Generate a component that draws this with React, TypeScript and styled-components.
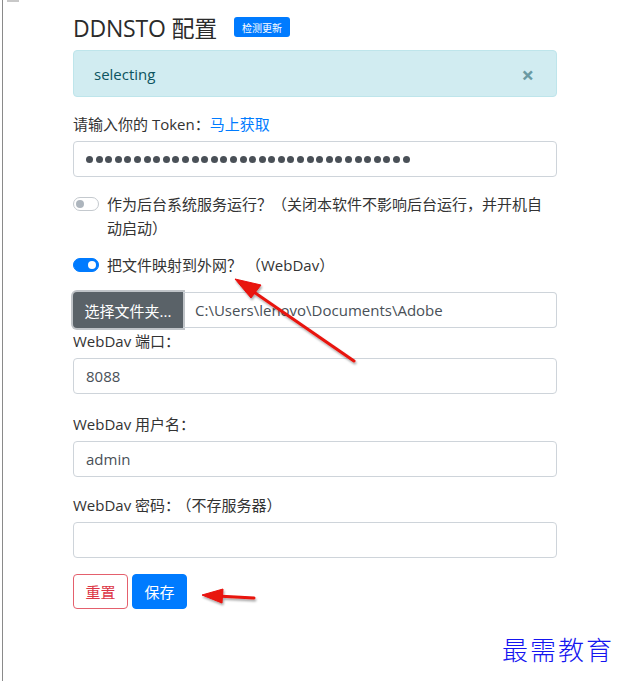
import React from 'react'
import styled, { createGlobalStyle } from 'styled-components'

const GlobalStyle = createGlobalStyle`
  html, body {
    margin: 0;
    padding: 0;
    background: #fff;
  }
  body {
    font-family: "Open Sans", "Noto Sans", "Noto Sans CJK SC", sans-serif;
    color: #212529;
  }
`

const Page = styled.div`
  position: relative;
  width: 621px;
  height: 681px;
  overflow: hidden;
  border-left: 1px solid #8a8a8a;
  margin-left: 2px;
  box-sizing: border-box;
`

const Corner = styled.div`
  position: absolute;
  left: 4px;
  top: 0;
  width: 12px;
  height: 2px;
  background: #c8c8c8;
`

const Content = styled.div`
  width: 484px;
  padding: 11px 0 0 70px;
  font-size: 15px;
  font-family: "Open Sans", "Noto Sans CJK SC", sans-serif;
`

const TitleRow = styled.div`
  display: flex;
  align-items: center;
  gap: 17px;
  height: 32px;
`

const Title = styled.h3`
  margin: 0;
  font-size: 23px;
  font-weight: 400;
  color: #2b2b2b;
  letter-spacing: -0.2px;
`

const Badge = styled.span`
  display: inline-flex;
  align-items: center;
  justify-content: center;
  width: 56px;
  height: 20px;
  background: #007bff;
  color: #fff;
  font-size: 10px;
  border-radius: 3px;
`

const Alert = styled.div`
  margin-top: 7px;
  height: 47px;
  box-sizing: border-box;
  display: flex;
  align-items: center;
  justify-content: space-between;
  padding: 0 20px;
  background: #d1ecf1;
  border: 1px solid #bee5eb;
  border-radius: 4px;
  color: #0c5460;
  font-size: 15px;
`

const Close = styled.span`
  color: #6a9aa3;
  font-size: 22px;
  font-weight: 700;
  line-height: 1;
  margin-right: 2px;
`

const Group = styled.div<{ $mt?: number }>`
  margin-top: ${p => p.$mt ?? 16}px;
`

const Label = styled.div`
  line-height: 22px;
  color: #333;
  margin-bottom: 6px;
`

const Link = styled.span`
  color: #007bff;
`

const Hint = styled.span`
  margin-left: 4px;
`

const Input = styled.div`
  height: 36px;
  box-sizing: border-box;
  border: 1px solid #ced4da;
  border-radius: 4px;
  display: flex;
  align-items: center;
  padding: 0 12px;
  color: #495057;
  font-size: 15px;
`

const Dot = styled.span`
  flex: none;
  width: 7px;
  height: 7px;
  border-radius: 50%;
  background: #4a5057;
  margin-right: 2.6px;
`

const SwitchRow = styled.div`
  display: flex;
  align-items: flex-start;
  gap: 8px;
  line-height: 24px;
  color: #333;
`

const Track = styled.span<{ $on?: boolean }>`
  flex: none;
  position: relative;
  width: 26px;
  height: 14px;
  margin-top: 5px;
  border-radius: 8px;
  box-sizing: border-box;
  border: 1px solid ${p => (p.$on ? '#007bff' : '#c4c9ce')};
  background: ${p => (p.$on ? '#007bff' : '#fff')};

  &::after {
    content: "";
    position: absolute;
    top: 2px;
    left: ${p => (p.$on ? '14px' : '2px')};
    width: 8px;
    height: 8px;
    border-radius: 50%;
    background: ${p => (p.$on ? '#fff' : '#adb5bd')};
  }
`

const SwitchText = styled.span`
  width: 440px;
`

const FileGroup = styled.div`
  display: flex;
  height: 36px;
  margin-top: 15px;
`

const FileButton = styled.div`
  flex: none;
  width: 110px;
  display: flex;
  align-items: center;
  justify-content: center;
  background: #5a6268;
  color: #fff;
  border-radius: 4px 0 0 4px;
  box-shadow: 0 0 0 2px rgba(130, 138, 145, 0.5);
  font-size: 15px;
`

const FilePath = styled.div`
  flex: 1;
  display: flex;
  align-items: center;
  padding: 0 12px;
  border: 1px solid #ced4da;
  border-left: none;
  border-radius: 0 4px 4px 0;
  color: #495057;
`

const Buttons = styled.div`
  display: flex;
  gap: 4px;
  margin-top: 16px;
`

const Btn = styled.div<{ $variant: 'danger' | 'primary' }>`
  width: 55px;
  height: 35px;
  box-sizing: border-box;
  display: flex;
  align-items: center;
  justify-content: center;
  border-radius: 4px;
  font-size: 15px;
  border: 1px solid ${p => (p.$variant === 'danger' ? '#e4606d' : '#007bff')};
  background: ${p => (p.$variant === 'danger' ? '#fff' : '#007bff')};
  color: ${p => (p.$variant === 'danger' ? '#dc3545' : '#fff')};
`

const Arrows = styled.svg`
  position: absolute;
  left: 0;
  top: 0;
  pointer-events: none;
`

const Watermark = styled.div`
  position: absolute;
  left: 499px;
  top: 630px;
  font-family: "Noto Sans CJK SC", serif;
  font-weight: 300;
  font-size: 26px;
  letter-spacing: 2px;
  color: #1515f0;
`

export default function App() {
  return (
    <>
      <GlobalStyle />
      <Page>
        <Corner />
        <Content>
          <TitleRow>
            <Title>DDNSTO 配置</Title>
            <Badge>检测更新</Badge>
          </TitleRow>

          <Alert>
            selecting
            <Close>×</Close>
          </Alert>

          <Group $mt={16}>
            <Label>
              请输入你的 Token：<Link>马上获取</Link>
            </Label>
            <Input>
              {Array.from({ length: 34 }, (_, i) => (
                <Dot key={i} />
              ))}
            </Input>
          </Group>

          <Group $mt={15}>
            <SwitchRow>
              <Track />
              <SwitchText>
                作为后台系统服务运行？（关闭本软件不影响后台运行，并开机自动启动）
              </SwitchText>
            </SwitchRow>
          </Group>

          <Group $mt={13}>
            <SwitchRow>
              <Track $on />
              <SwitchText>
                把文件映射到外网？<Hint>（WebDav）</Hint>
              </SwitchText>
            </SwitchRow>
          </Group>

          <FileGroup>
            <FileButton>选择文件夹...</FileButton>
            <FilePath>C:\Users\lenovo\Documents\Adobe</FilePath>
          </FileGroup>

          <Group $mt={2}>
            <Label>WebDav 端口：</Label>
            <Input>8088</Input>
          </Group>

          <Group $mt={19}>
            <Label>WebDav 用户名：</Label>
            <Input>admin</Input>
          </Group>

          <Group $mt={17}>
            <Label>
              WebDav 密码：<Hint>（不存服务器）</Hint>
            </Label>
            <Input />
          </Group>

          <Buttons>
            <Btn $variant="danger">重置</Btn>
            <Btn $variant="primary">保存</Btn>
          </Buttons>
        </Content>

        <Arrows width="621" height="681">
          <defs>
            <filter id="shadow" x="-20%" y="-20%" width="140%" height="140%">
              <feDropShadow dx="1" dy="2" stdDeviation="1.2" floodColor="#000" floodOpacity="0.35" />
            </filter>
          </defs>
          <g filter="url(#shadow)" fill="#e8120c" stroke="#e8120c">
            <line x1="351" y1="361" x2="245" y2="288" strokeWidth="3" strokeLinecap="round" />
            <polygon points="232,279 258,285 248,298" strokeWidth="1" />
            <line x1="251" y1="598" x2="214" y2="596" strokeWidth="3" strokeLinecap="round" />
            <polygon points="199,595 220,589 219,603" strokeWidth="1" />
          </g>
        </Arrows>

        <Watermark>最需教育</Watermark>
      </Page>
    </>
  )
}
